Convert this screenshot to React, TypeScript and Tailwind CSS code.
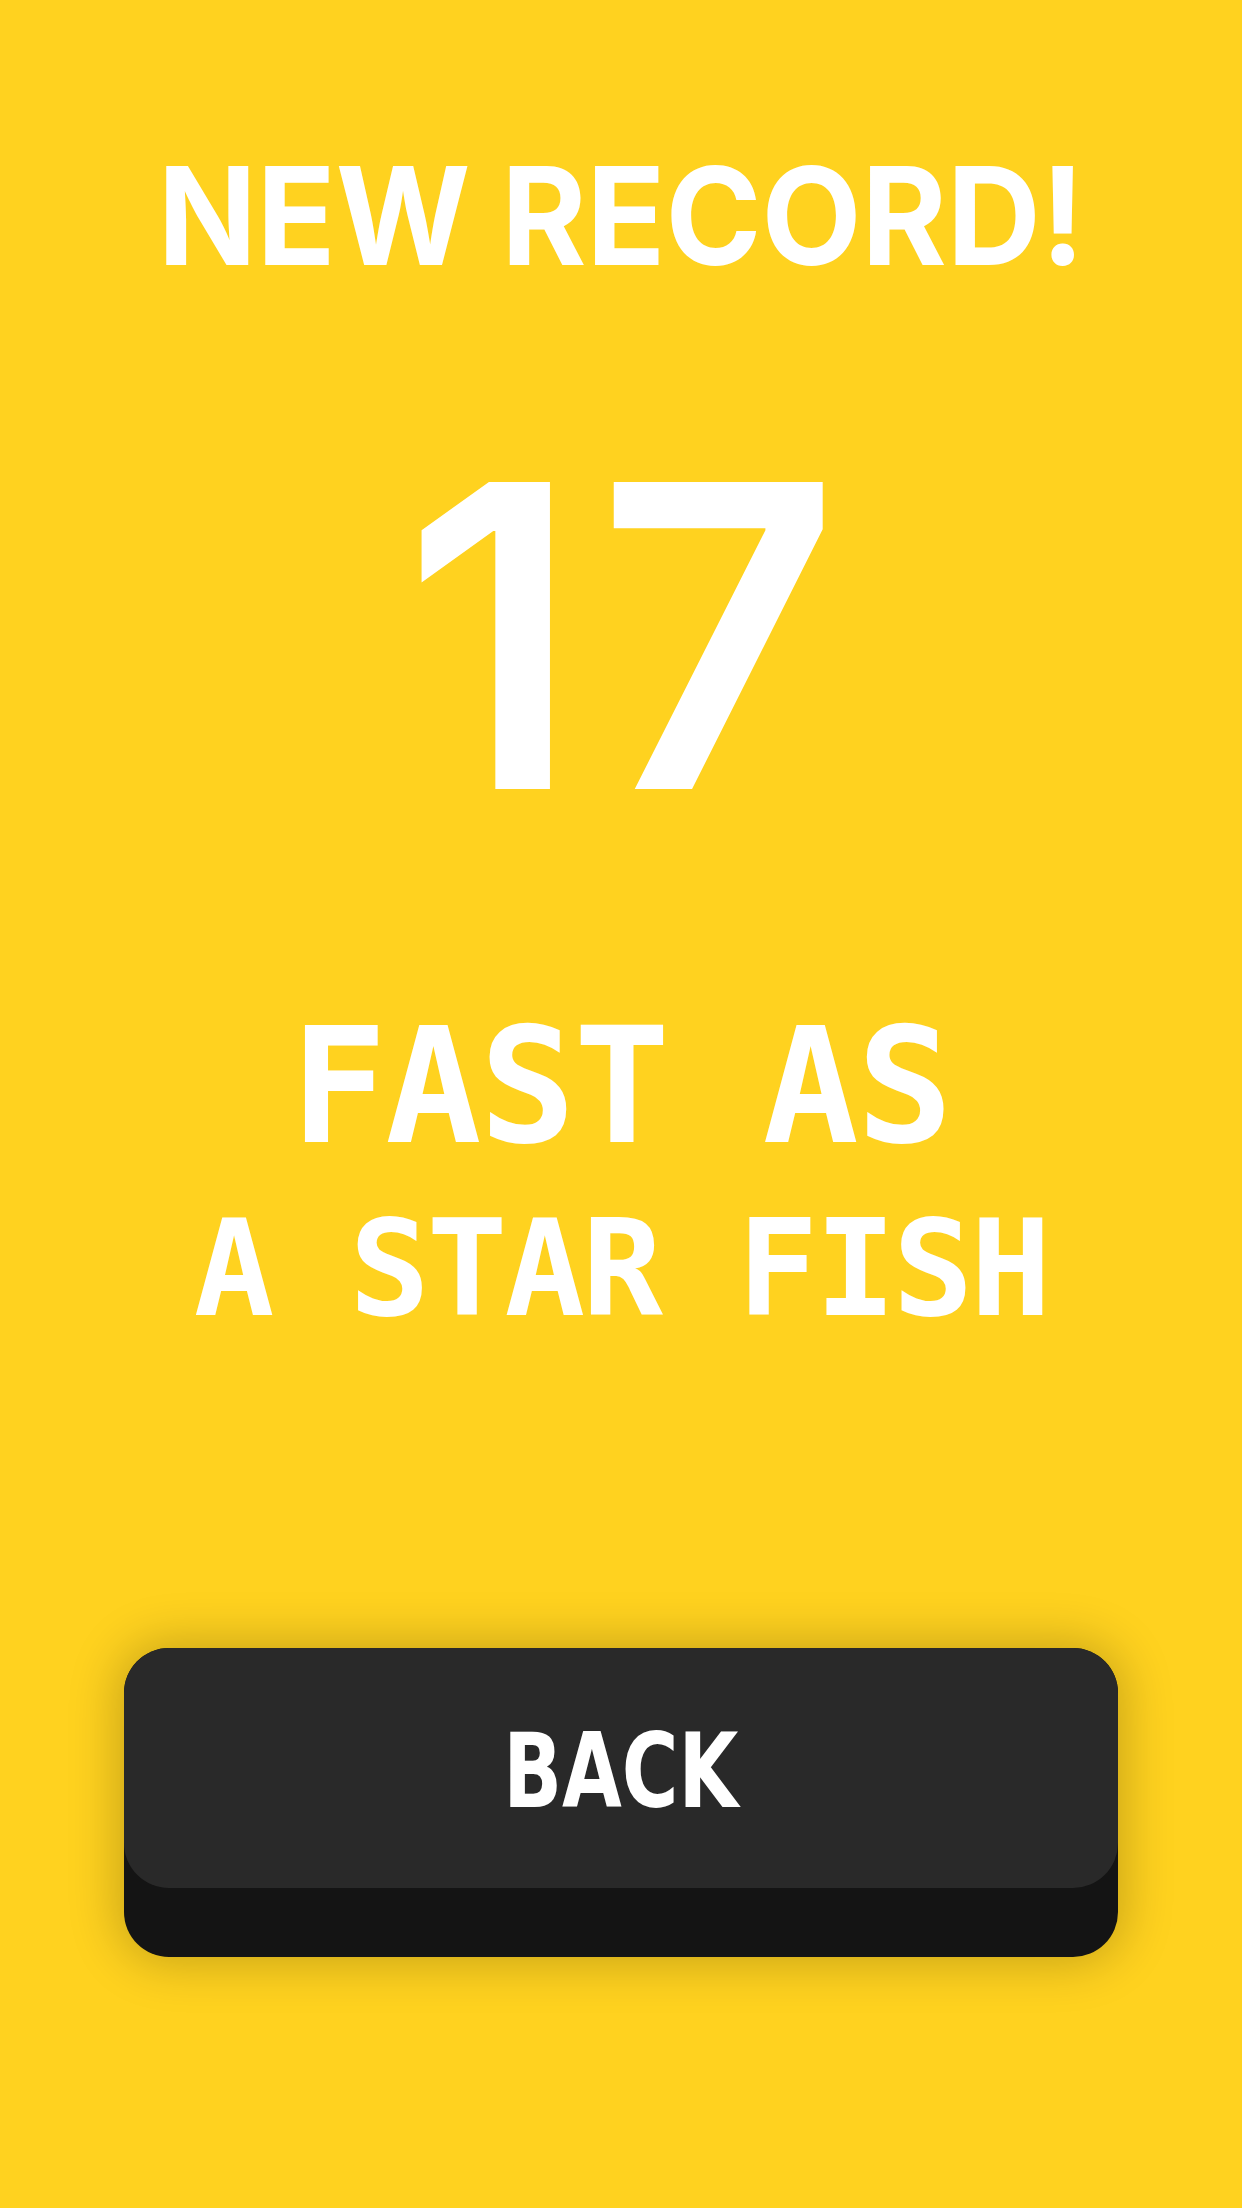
import React from "react";

export default function App() {
  return (
    <div className="w-full h-[2208px] bg-[#FFD21F] flex flex-col items-center overflow-hidden">
      <div className="mt-[148px] h-[136px] text-[136px] leading-none font-bold text-white whitespace-nowrap scale-x-[0.955] font-['Inter','Liberation_Sans',sans-serif]">
        NEW RECORD!
      </div>
      <div className="mt-[141px] h-[422px] pl-[16px] text-[422px] leading-none font-semibold tracking-[16px] text-white whitespace-nowrap font-['Inter','Liberation_Sans',sans-serif]">
        17
      </div>
      <div className="mt-[160px] h-[160px] text-[160px] leading-none font-bold text-white whitespace-pre tracking-[-2px] font-['DejaVu_Sans_Mono',monospace]">
        FAST AS
      </div>
      <div className="mt-[35px] h-[134px] text-[134px] leading-none font-bold text-white whitespace-pre tracking-[-3px] font-['DejaVu_Sans_Mono',monospace]">
        A STAR FISH
      </div>
      <div className="mt-[312px] w-[994px] h-[309px] rounded-[45px] bg-[#141414] shadow-[0_0_50px_6px_rgba(0,0,0,0.22)]">
        <div className="h-[240px] pt-[6px] rounded-[45px] bg-[#292929] flex items-center justify-center">
          <span className="inline-block text-[103px] leading-none font-bold text-white scale-x-[0.75] font-['DejaVu_Sans',sans-serif]">
            BACK
          </span>
        </div>
      </div>
    </div>
  );
}
